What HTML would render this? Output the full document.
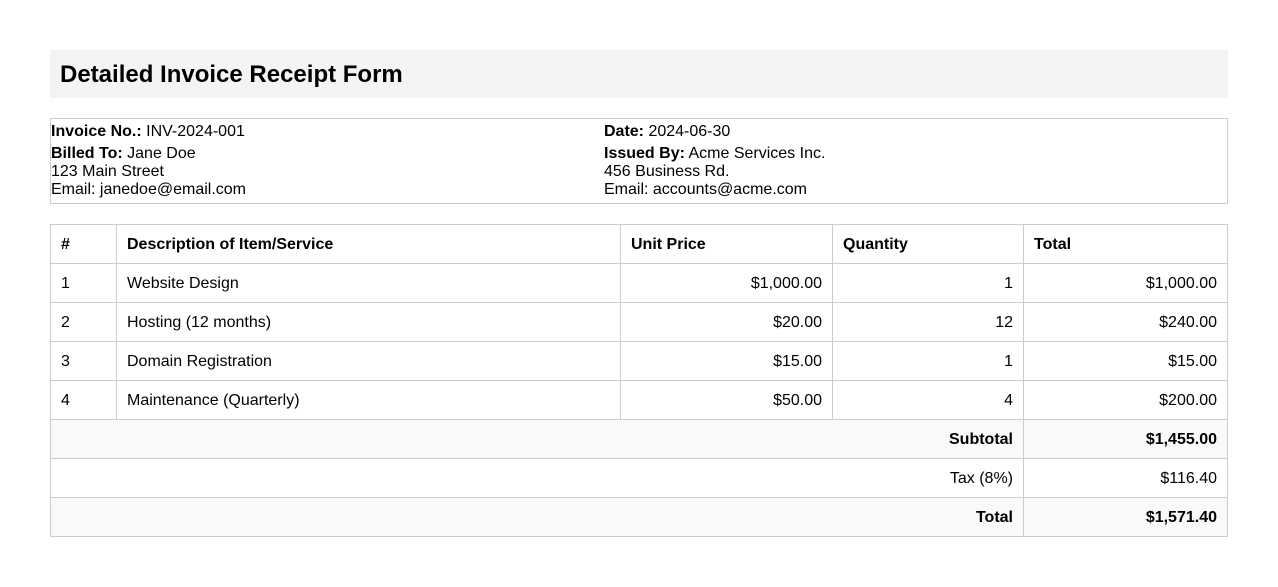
<!DOCTYPE html>
<html><head><style>
html{overflow:hidden}
body{margin:0;padding:50px;font-family:"Liberation Sans",Arial,sans-serif;font-size:16px;color:#000;background:#fff;width:1178px}
.hdr{background:#f4f4f4;height:48px;box-sizing:border-box;padding:1px 10px 0;display:flex;align-items:center}
.hdr h1{margin:0;font-size:24px;font-weight:bold}
.info{margin-top:20px;border:1px solid #ccc;height:86px;box-sizing:border-box;display:flex;line-height:18px;padding-top:2px}
.info .c{box-sizing:border-box}
.info .c1{width:553px}
.info p{margin:2px 0 4px}
table{margin-top:20px;width:1177px;border-collapse:collapse;table-layout:fixed}
td,th{border:1px solid #ccc;height:39px;padding:1px 10px 0;box-sizing:border-box;text-align:left}
th{font-weight:bold}
.r{text-align:right}
.g td{background:#f9f9f9}
</style></head><body>
<div class="hdr"><h1>Detailed Invoice Receipt Form</h1></div>
<div class="info">
<div class="c c1"><p><b>Invoice No.:</b> INV-2024-001</p><div><b>Billed To:</b> Jane Doe<br>123 Main Street<br>Email: janedoe@email.com</div></div>
<div class="c"><p><b>Date:</b> 2024-06-30</p><div><b>Issued By:</b> Acme Services Inc.<br>456 Business Rd.<br>Email: accounts@acme.com</div></div>
</div>
<table>
<colgroup><col style="width:66px"><col style="width:504px"><col style="width:212px"><col style="width:191px"><col style="width:204px"></colgroup>
<tr><th>#</th><th>Description of Item/Service</th><th>Unit Price</th><th>Quantity</th><th>Total</th></tr>
<tr><td>1</td><td>Website Design</td><td class="r">$1,000.00</td><td class="r">1</td><td class="r">$1,000.00</td></tr>
<tr><td>2</td><td>Hosting (12 months)</td><td class="r">$20.00</td><td class="r">12</td><td class="r">$240.00</td></tr>
<tr><td>3</td><td>Domain Registration</td><td class="r">$15.00</td><td class="r">1</td><td class="r">$15.00</td></tr>
<tr><td>4</td><td>Maintenance (Quarterly)</td><td class="r">$50.00</td><td class="r">4</td><td class="r">$200.00</td></tr>
<tr class="g"><td colspan="4" class="r"><b>Subtotal</b></td><td class="r"><b>$1,455.00</b></td></tr>
<tr><td colspan="4" class="r">Tax (8%)</td><td class="r">$116.40</td></tr>
<tr class="g"><td colspan="4" class="r"><b>Total</b></td><td class="r"><b>$1,571.40</b></td></tr>
</table>
</body></html>
